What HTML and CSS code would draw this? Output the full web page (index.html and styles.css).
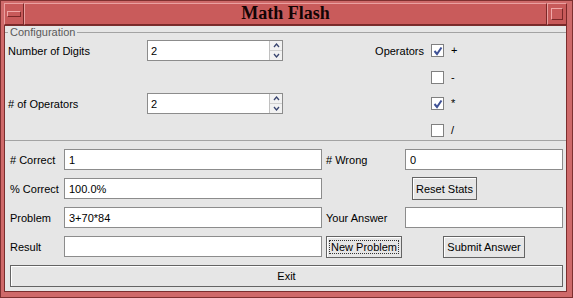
FILE: index.html
```html
<!DOCTYPE html>
<html lang="en">
<head>
    <meta charset="UTF-8">
    <title>Math Flash</title>
    <link rel="stylesheet" href="styles.css">
</head>
<body>
    <div class="window">
        <div class="titlebar">
            <div class="tb-btn"><span class="min-bar"></span></div>
            <div class="title">Math Flash</div>
            <div class="tb-btn"><span class="max-box"></span></div>
        </div>

        <div class="content">
            <!-- Configuration panel -->
            <fieldset class="config">
                <legend>Configuration</legend>
                <div class="config-grid">
                    <span class="cfg-label row1">Number of Digits</span>
                    <div class="spinner row1">
                        <input type="text" value="2">
                        <div class="arrows">
                            <span class="arrow"><svg width="7" height="5" viewBox="0 0 7 5"><polyline points="1,4 3.5,1 6,4" /></svg></span>
                            <span class="arrow"><svg width="7" height="5" viewBox="0 0 7 5"><polyline points="1,1 3.5,4 6,1" /></svg></span>
                        </div>
                    </div>

                    <span class="cfg-label row3"># of Operators</span>
                    <div class="spinner row3">
                        <input type="text" value="2">
                        <div class="arrows">
                            <span class="arrow"><svg width="7" height="5" viewBox="0 0 7 5"><polyline points="1,4 3.5,1 6,4" /></svg></span>
                            <span class="arrow"><svg width="7" height="5" viewBox="0 0 7 5"><polyline points="1,1 3.5,4 6,1" /></svg></span>
                        </div>
                    </div>

                    <span class="ops-label">Operators</span>

                    <span class="check row1c"><svg width="10" height="10" viewBox="0 0 10 10"><polyline points="1.5,5 4,8 8.5,1.5" /></svg></span>
                    <span class="sign row1c">+</span>
                    <span class="check row2c"></span>
                    <span class="sign row2c">-</span>
                    <span class="check row3c"><svg width="10" height="10" viewBox="0 0 10 10"><polyline points="1.5,5 4,8 8.5,1.5" /></svg></span>
                    <span class="sign row3c">*</span>
                    <span class="check row4c"></span>
                    <span class="sign row4c">/</span>
                </div>
            </fieldset>

            <!-- Stats and problem -->
            <div class="stats">
                <span class="lbl"># Correct</span>
                <input class="field" type="text" value="1">
                <span class="lbl lbl2"># Wrong</span>
                <input class="field" type="text" value="0">

                <span class="lbl">% Correct</span>
                <input class="field" type="text" value="100.0%">
                <button class="btn reset">Reset Stats</button>

                <span class="lbl">Problem</span>
                <input class="field" type="text" value="3+70*84">
                <span class="lbl lbl2">Your Answer</span>
                <input class="field" type="text" value="">

                <span class="lbl">Result</span>
                <input class="field" type="text" value="">
                <button class="btn new-problem"><span class="focus">New Problem</span></button>
                <button class="btn submit">Submit Answer</button>
            </div>

            <button class="btn exit">Exit</button>
        </div>
    </div>
</body>
</html>
```

FILE: styles.css
```css
/* Window frame */
body {
    margin: 0;
    background-color: #d47070;
    font-family: 'Liberation Sans', Arial, sans-serif;
    font-size: 11px;
    color: #000;
}

.window {
    width: 573px;
    height: 298px;
    box-sizing: border-box;
    background-color: #cf6a6a;
    border: 1px solid #7e3030;
    padding: 2px 5px 5px 3px;
    display: flex;
    flex-direction: column;
}

.titlebar {
    height: 22px;
    display: flex;
}

.tb-btn {
    width: 20px;
    box-sizing: border-box;
    background-color: #c85a5a;
    border: 1px solid;
    border-color: #eaa0a0 #7a2828 #7a2828 #eaa0a0;
    display: flex;
    align-items: center;
    justify-content: center;
}

.min-bar {
    width: 12px;
    height: 4px;
    border: 1px solid;
    border-color: #f0a8a8 #7a2828 #7a2828 #f0a8a8;
}

.max-box {
    width: 10px;
    height: 10px;
    border: 1px solid;
    border-color: #f0a8a8 #7a2828 #7a2828 #f0a8a8;
}

.title {
    flex: 1;
    background-color: #c95b5b;
    border: 1px solid;
    border-color: #eaa0a0 #7a2828 #7a2828 #eaa0a0;
    font-family: 'Liberation Serif', 'Times New Roman', serif;
    font-weight: bold;
    font-size: 18px;
    line-height: 19px;
    text-align: center;
    color: #120404;
}

.content {
    flex: 1;
    background-color: #e6e6e6;
    border: 1px solid #7a2e2e;
    display: flex;
    flex-direction: column;
    padding-bottom: 4px;
}

/* Configuration panel */
.config {
    margin: 0;
    padding: 0 0 0 3px;
    border: none;
    border-top: 1px solid #a3a3a3;
    border-bottom: 1px solid #a3a3a3;
    min-inline-size: 0;
}

.config legend {
    padding: 0 2px;
    margin-left: 0;
    line-height: 12px;
    color: #5a5a5a;
}

.config-grid {
    display: grid;
    grid-template-columns: 139px 136px 148px 13px 1fr;
    grid-template-rows: 23px 23px 23px 21px;
    row-gap: 3.5px;
    align-items: center;
    padding-top: 1px;
}

.cfg-label { grid-column: 1; }
.spinner { grid-column: 2; }
.row1 { grid-row: 1; }
.row3 { grid-row: 3; }

.spinner {
    height: 21px;
    box-sizing: border-box;
    display: flex;
    background: #fff;
    border: 1px solid #8c8c8c;
}

.spinner input {
    flex: 1;
    min-width: 0;
    border: none;
    outline: none;
    padding: 0 3px;
    font: inherit;
    background: transparent;
}

.arrows {
    width: 12px;
    display: flex;
    flex-direction: column;
    border-left: 1px solid #c0c0c0;
}

.arrow {
    flex: 1;
    display: flex;
    align-items: center;
    justify-content: center;
    background: #f2f2f2;
    border-bottom: 1px solid #d0d0d0;
}

.arrow:last-child { border-bottom: none; }

.arrow svg polyline {
    fill: none;
    stroke: #3a4670;
    stroke-width: 1.3;
}

.ops-label {
    grid-column: 3;
    grid-row: 1;
    justify-self: end;
    margin-right: 7px;
}

.check {
    grid-column: 4;
    width: 13px;
    height: 13px;
    box-sizing: border-box;
    background: #fff;
    border: 1px solid #808080;
    display: flex;
    align-items: center;
    justify-content: center;
}

.check svg polyline {
    fill: none;
    stroke: #3f5296;
    stroke-width: 2;
}

.sign {
    grid-column: 5;
    padding-left: 7px;
    line-height: 13px;
}

.row1c { grid-row: 1; }
.row2c { grid-row: 2; }
.row3c { grid-row: 3; }
.row4c {
    grid-row: 4;
    align-self: start;
    margin-top: 5px;
}

/* Stats section */
.stats {
    display: grid;
    grid-template-columns: 54px 258px 83px 158px;
    grid-template-rows: repeat(4, 21px);
    row-gap: 8px;
    align-items: center;
    padding: 8.5px 0 0 5px;
}

.lbl2 { padding-left: 4px; }

.field {
    height: 21px;
    box-sizing: border-box;
    border: 1px solid #8c8c8c;
    background: #fff;
    padding: 0 4px;
    font: inherit;
    outline: none;
    min-width: 0;
}

.btn {
    font: inherit;
    color: #000;
    background-color: #e6e6e6;
    border: 1px solid #646464;
    box-shadow: inset 1px 1px 0 #ffffff;
    padding: 0 3px;
    height: 23px;
    cursor: pointer;
}

.reset {
    grid-column: 3 / 5;
    justify-self: center;
    margin-left: 4px;
}

.new-problem {
    justify-self: start;
    margin-left: 4px;
    padding: 0 2px;
    height: 22px;
}

.focus {
    border: 1px dotted #333;
    padding: 0 1px;
}

.submit {
    justify-self: center;
    height: 22px;
}

.exit {
    margin: 7.5px 3px 0 5px;
    height: 22px;
}
```
